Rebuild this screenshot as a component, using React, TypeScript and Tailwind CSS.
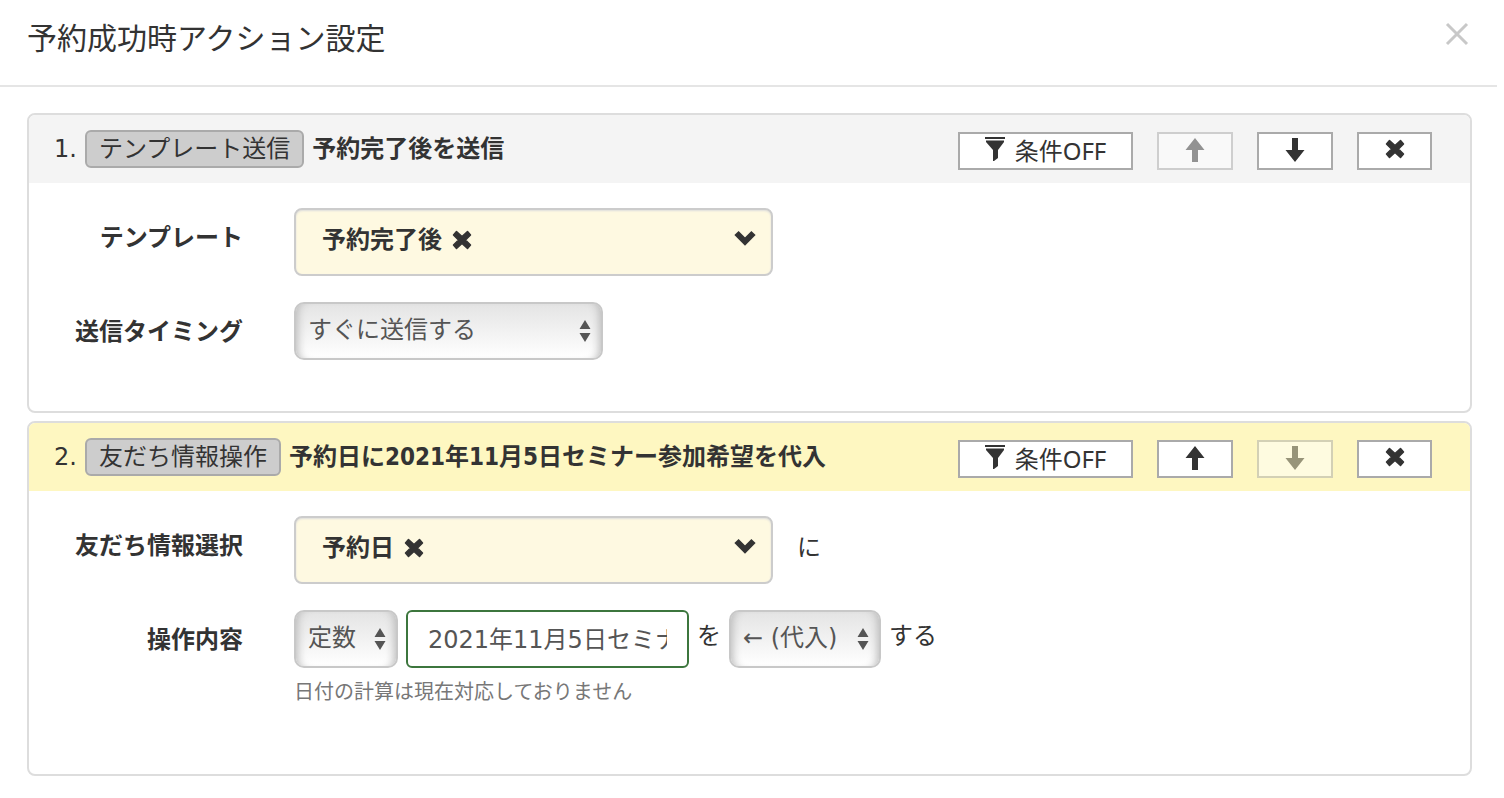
import React, { useState } from 'react';

type IconProps = { className?: string };

const RemoveIcon: React.FC<IconProps> = ({ className = '' }) => (
  <svg className={`h-5 w-5 ${className}`} viewBox="0 0 20 20" fill="currentColor" aria-hidden="true">
    <path
      d="M4.500 1.500 10 6.500l5.500-5L18.500 5l-5 5 5 5-3 3.500-5.500-5-5.500 5L1.500 15l5-5-5-5Z"
      stroke="currentColor"
      strokeWidth="1.500"
      strokeLinejoin="round"
    />
  </svg>
);

const ArrowUpIcon: React.FC<IconProps> = ({ className = '' }) => (
  <svg className={`h-6 w-5 ${className}`} viewBox="0 0 20 24" fill="currentColor" aria-hidden="true">
    <path d="M10 0 19.500 12H13v12H7V12H.5Z" />
  </svg>
);

const FilterIcon: React.FC<IconProps> = ({ className = '' }) => (
  <svg className={`h-6 w-5 ${className}`} viewBox="0 0 20 24" fill="currentColor" aria-hidden="true">
    <path d="M0 0h20v2H0ZM1 3.500h18v1.500l-6 8v8l-4 3h-1V13l-7-8Z" />
  </svg>
);

const ChevronIcon: React.FC<IconProps> = ({ className = '' }) => (
  <svg className={`h-4 w-6 ${className}`} viewBox="0 0 24 16" fill="none" aria-hidden="true">
    <path d="m3.500 3 8.500 8.500L20.500 3" stroke="currentColor" strokeWidth="6" />
  </svg>
);

const SortIcon: React.FC<IconProps> = ({ className = '' }) => (
  <svg className={`h-6 w-3 ${className}`} viewBox="0 0 12 24" fill="currentColor" aria-hidden="true">
    <path d="M6 1l5.500 9H.5ZM.5 14h11L6 23Z" />
  </svg>
);

const toolButton =
  'flex h-[38px] items-center justify-center border-2 border-[#aaa] bg-white disabled:opacity-50';

const SelectBox: React.FC<{ id: string; label?: string; options: string[]; width: string }> = ({
  id,
  label,
  options,
  width,
}) => (
  <div className={`relative ${width}`}>
    <select
      id={id}
      aria-label={label}
      className="h-[58px] w-full appearance-none rounded-[10px] border-2 border-[#c8c8c8] bg-linear-to-b from-[#e4e4e4] to-white pb-0.5 pl-3 text-[#555] shadow-[inset_9px_0_8px_-7px_#bbb,inset_-9px_0_8px_-7px_#bbb]"
    >
      {options.map((option) => (
        <option key={option}>{option}</option>
      ))}
    </select>
    <SortIcon className="pointer-events-none absolute top-[17px] right-3 text-[#555]" />
  </div>
);

const TagPicker: React.FC<{ id: string; value: string }> = ({ id, value }) => {
  const [selected, setSelected] = useState(value);
  return (
    <div className="flex h-[68px] w-[479px] items-start rounded-lg border-2 border-[#ccc] bg-[#fef9e1] pt-3 pr-3.5 pl-[26px] shadow-[inset_0_1px_2px_#ddd]">
      <span className="font-bold">{selected}</span>
      {selected && (
        <button type="button" aria-label="選択を解除" onClick={() => setSelected('')} className="mt-2 ml-2.5">
          <RemoveIcon />
        </button>
      )}
      <button id={id} type="button" className="mt-2 ml-auto">
        <ChevronIcon />
      </button>
    </div>
  );
};

const Row: React.FC<{ label: string; htmlFor: string; children: React.ReactNode }> = ({
  label,
  htmlFor,
  children,
}) => (
  <div className="flex items-start">
    <label htmlFor={htmlFor} className="w-[214px] shrink-0 pt-3 text-right font-bold">
      {label}
    </label>
    <div className="ml-[51px]">{children}</div>
  </div>
);

type ActionCardProps = {
  no: number;
  kind: string;
  summary: string;
  active?: boolean;
  first?: boolean;
  last?: boolean;
  children: React.ReactNode;
};

const ActionCard: React.FC<ActionCardProps> = ({ no, kind, summary, active, first, last, children }) => (
  <section className="overflow-hidden rounded-lg border-2 border-[#ddd] bg-white">
    <header
      className={`flex h-[68px] items-center justify-between pr-[38px] pl-[25px] ${
        active ? 'bg-[#fef7c1]' : 'bg-[#f4f4f4]'
      }`}
    >
      <div className="flex items-center gap-2">
        <span>{no}.</span>
        <span className="flex h-[38px] items-center rounded-md border-2 border-[#aaa] bg-[#cdcdcd] px-3">
          {kind}
        </span>
        <h2 className="font-['DejaVu_Sans_Condensed','Noto_Sans_CJK_JP',sans-serif] font-bold">{summary}</h2>
      </div>
      <div className="flex gap-6 pt-1">
        <button type="button" className={`${toolButton} w-[175px] gap-2.5 font-['Noto_Sans','Noto_Sans_CJK_JP',sans-serif]`}>
          <FilterIcon className="mb-1" />
          条件OFF
        </button>
        <button type="button" aria-label="上へ移動" disabled={first} className={`${toolButton} w-[76px] pb-0.5`}>
          <ArrowUpIcon />
        </button>
        <button type="button" aria-label="下へ移動" disabled={last} className={`${toolButton} w-[76px] pb-0.5`}>
          <ArrowUpIcon className="rotate-180" />
        </button>
        <button type="button" aria-label="削除" className={`${toolButton} w-[75px] pb-1`}>
          <RemoveIcon />
        </button>
      </div>
    </header>
    {children}
  </section>
);

const App: React.FC = () => {
  const [constant, setConstant] = useState('2021年11月5日セミナー参加希望');

  return (
    <div className="min-h-screen bg-white font-['DejaVu_Sans','Noto_Sans_CJK_JP',sans-serif] text-2xl leading-9 text-[#333]" lang="ja">
      <header className="mr-[7px] flex items-start justify-between border-b-2 border-[#e5e5e5] pt-[18px] pr-7 pb-[25px] pl-[27px]">
        <h1 className="text-[30px] leading-[42px]">予約成功時アクション設定</h1>
        <button type="button" aria-label="閉じる" className="mt-1 text-[#c8c8c8]">
          <svg className="h-6 w-6" viewBox="0 0 24 24" fill="none" stroke="currentColor" strokeWidth="3">
            <path d="m2 2 20 20M22 2 2 22" />
          </svg>
        </button>
      </header>

      <main className="flex flex-col gap-2 pt-[26px] pr-8 pb-6 pl-[27px]">
        <ActionCard no={1} kind="テンプレート送信" summary="予約完了後を送信" first>
          <div className="flex flex-col gap-[26px] pt-[25px] pb-[51px]">
            <Row label="テンプレート" htmlFor="template">
              <TagPicker id="template" value="予約完了後" />
            </Row>
            <Row label="送信タイミング" htmlFor="timing">
              <SelectBox id="timing" options={['すぐに送信する']} width="w-[309px]" />
            </Row>
          </div>
        </ActionCard>

        <ActionCard no={2} kind="友だち情報操作" summary="予約日に2021年11月5日セミナー参加希望を代入" active last>
          <div className="flex flex-col gap-[26px] pt-[25px] pb-16">
            <Row label="友だち情報選択" htmlFor="friend-info">
              <div className="flex items-start">
                <TagPicker id="friend-info" value="予約日" />
                <span className="ml-6 pt-3.5">に</span>
              </div>
            </Row>
            <Row label="操作内容" htmlFor="operation">
              <div className="flex items-start gap-2">
                <SelectBox id="operation" options={['定数']} width="w-[104px]" />
                <input
                  type="text"
                  aria-label="値"
                  value={constant}
                  onChange={(e) => setConstant(e.target.value)}
                  className="h-[58px] w-[283px] rounded-md border-2 border-[#3c763d] bg-white px-5 pb-1 text-[#555]"
                />
                <span className="pt-2">を</span>
                <SelectBox id="operator" label="演算" options={['← (代入)']} width="w-[152px]" />
                <span className="pt-2">する</span>
              </div>
              <p className="mt-1.5 text-xl leading-9 text-[#777]">日付の計算は現在対応しておりません</p>
            </Row>
          </div>
        </ActionCard>
      </main>
    </div>
  );
};

export default App;
